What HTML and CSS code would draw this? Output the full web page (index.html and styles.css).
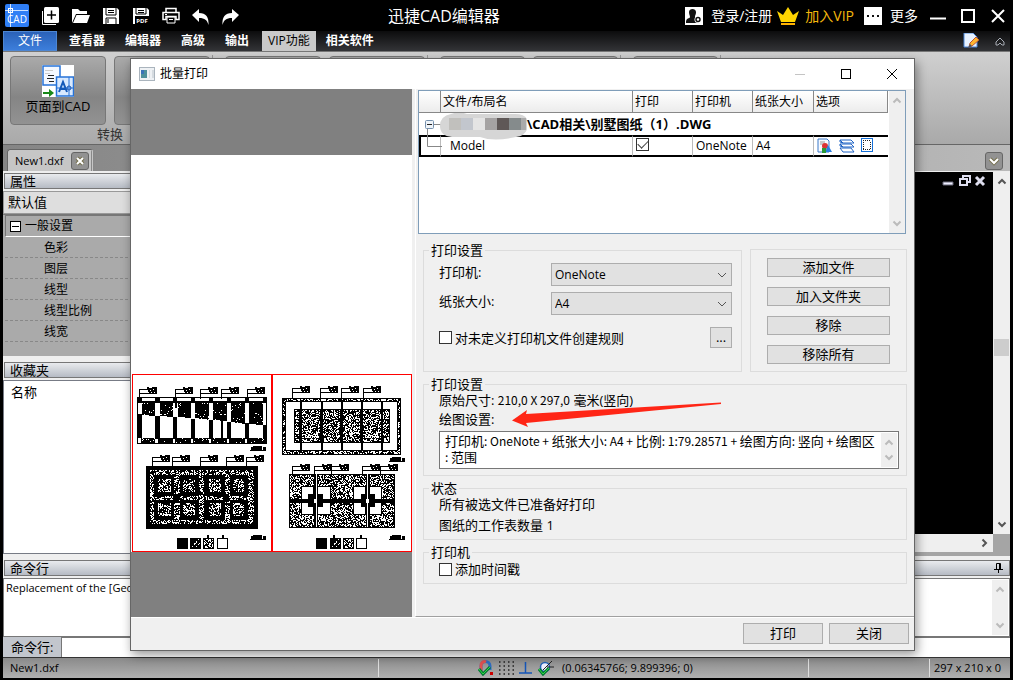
FILE: index.html
```html
<!DOCTYPE html>
<html lang="zh-CN">
<head>
<meta charset="utf-8">
<title>迅捷CAD编辑器</title>
<link rel="stylesheet" href="styles.css">
</head>
<body>
<svg class="defs" width="0" height="0" aria-hidden="true">
  <defs>
    <symbol id="up" viewBox="0 0 10 8"><path d="M1.500 6.500L5 3l3.500 3.500" fill="none" stroke="currentColor" stroke-width="2"/></symbol>
    <symbol id="down" viewBox="0 0 10 8"><path d="M1.500 1.500L5 5l3.500-3.500" fill="none" stroke="currentColor" stroke-width="2"/></symbol>
  </defs>
</svg>

<div class="app">
  <header class="titlebar">
    <svg class="logo" viewBox="0 0 24 23"><rect width="24" height="23" rx="2" fill="#2f7ef5"/><path d="M5.500 0v23M0 6.500h23" stroke="#cfe3ff" fill="none"/><rect x="3.500" y="4.500" width="4" height="4" fill="none" stroke="#fff"/><text x="12" y="19" text-anchor="middle" class="logo-text">CAD</text></svg>
    <nav class="quick" aria-label="快速访问">
      <button aria-label="新建"><svg viewBox="0 0 18 18"><path d="M.5 4v13.500H14" stroke="#fff" fill="none"/><rect x="2" y="0" width="15" height="16" rx="1.500" fill="#fff"/><path d="M9.500 3.500v9M5 8h9" stroke="#000" stroke-width="1.500"/></svg></button>
      <button aria-label="打开"><svg viewBox="0 0 18 18"><path d="M0 16V2h6l2 2h7v3H4z" fill="#fff"/><path d="M4.500 8H18l-3 8H1z" fill="#fff"/></svg></button>
      <button aria-label="保存"><svg viewBox="0 0 18 18"><path d="M1 1h14l2 2v14H1z" fill="#fff"/><path d="M4 1v7h10V1M4 17v-6h10v6" fill="none" stroke="#000"/><path d="M6 3.500h6M6 5.500h6M6 12v4" stroke="#000"/></svg></button>
      <button aria-label="保存为PDF"><svg viewBox="0 0 18 18"><path d="M1 1h14l2 2v14H1z" fill="#fff"/><path d="M4 1v6h10V1" fill="none" stroke="#000"/><path d="M6 3.500h6M6 5.500h6" stroke="#000"/><rect x="3" y="9" width="14" height="8" fill="#000"/><text x="10" y="15.500" text-anchor="middle" class="pdf-text">PDF</text></svg></button>
      <button aria-label="打印"><svg viewBox="0 0 18 18"><path d="M4 5V1.500h10V5M1 5.500h16v7h-3v-3H4v3H1z" fill="none" stroke="#fff" stroke-width="1.500"/><path d="M5 10h8v6H5zM7 12.500h4M3 7.500h2" fill="none" stroke="#fff"/></svg></button>
      <button aria-label="撤销"><svg viewBox="0 0 18 18"><path d="M0 8l7-6v4c7 0 10 4 9.500 12C15 13 13 11 7 11v4z" fill="#fff"/></svg></button>
      <button aria-label="重做"><svg viewBox="0 0 18 18"><path d="M17 8l-7-6v4C3 6 0 10 .5 18 2 13 4 11 10 11v4z" fill="#fff"/></svg></button>
    </nav>
    <h1 class="app-title">迅捷CAD编辑器</h1>
    <div class="account">
      <a href="#login"><svg viewBox="0 0 18 18"><rect width="18" height="18" fill="#fff"/><path d="M4 5c0-4 7-4 7 0 0 3-1 3-1 5 2 1 1 5 3 6H1c0-4 1-4 4-5.500C5 8 4 8 4 5z" fill="#111"/><circle cx="13" cy="12.500" r="3.500" fill="#fff"/><circle cx="13" cy="12.500" r="2" fill="#fff" stroke="#111" stroke-width="1.500"/></svg>登录/注册</a>
      <a href="#vip" class="vip"><svg class="crown" viewBox="0 0 22 18"><path d="M0 4l6 4 5-8 5 8 6-4-4 11H4z" fill="#ffd400"/><path d="M4 16h14v2H4z" fill="#ffb300"/></svg>加入VIP</a>
      <a href="#more"><svg viewBox="0 0 18 18"><rect width="18" height="18" fill="#fff"/><path d="M3 8h2v2H3zm5 0h2v2H8zm5 0h2v2h-2z" fill="#111"/></svg>更多</a>
    </div>
    <div class="win">
      <button aria-label="最小化"><svg viewBox="0 0 16 16"><path d="M0 10.500h16" stroke="#fff" stroke-width="2"/></svg></button>
      <button aria-label="最大化"><svg viewBox="0 0 16 16"><rect x="2" y="2" width="12" height="12" fill="none" stroke="#fff" stroke-width="2"/></svg></button>
      <button aria-label="关闭程序"><svg viewBox="0 0 16 16"><path d="M2 2l12 12M14 2L2 14" stroke="#fff" stroke-width="2"/></svg></button>
    </div>
  </header>

  <nav class="menubar">
    <a href="#file" class="file">文件</a>
    <a href="#viewer">查看器</a>
    <a href="#editor">编辑器</a>
    <a href="#adv">高级</a>
    <a href="#out">输出</a>
    <a href="#vipf" class="current">VIP功能</a>
    <a href="#soft">相关软件</a>
    <span class="menu-tools">
      <svg width="16" height="16" viewBox="0 0 16 16"><path d="M1 0h9l4 4v10H1z" fill="#e8f2ff" stroke="#4a86d8"/><path d="M6 14l1-4 6-6 3 3-7 6z" fill="#ffb52e" stroke="#b53"/><path d="M5 15l2-4 2 2z" fill="#456"/></svg>
      <svg width="10" height="9" viewBox="0 0 10 9"><path d="M1 5l4-4 4 4M1 5v3h2l2-2 2 2h2V5" fill="none" stroke="#a8adb5"/></svg>
    </span>
  </nav>

  <section class="ribbon">
    <div class="group">
      <div class="group-row">
        <button class="big"><svg width="32" height="32" viewBox="0 0 32 32"><rect width="32" height="32" fill="#fff"/><rect x="1" y="1" width="17" height="19" fill="#f4f8ff" stroke="#2673d9" stroke-width="1.500"/><path d="M3 5.500h8M3 8.500h5" stroke="#ccc"/><path d="M6 10.500h6M5 13.500h7M7 16.500h5" stroke="#222"/><rect x="14.500" y="12" width="17" height="19" fill="#d8e9ff" stroke="#2673d9" stroke-width="1.500"/><path d="M27 12v19M15 23h16" stroke="#2673d9"/><circle cx="27" cy="23" r="2" fill="none" stroke="#1b56b0"/><path d="M17 27l4-10 4 10M18.500 24h5" fill="none" stroke="#1459b8" stroke-width="2"/><path d="M1 27h6v-3l5 4-5 4v-3H1z" fill="#188818"/></svg><span>页面到CAD</span></button>
        <button class="big" aria-label="PDF到DWG"></button>
      </div>
      <div class="group-name">转换</div>
    </div>
    <div class="group"><div class="group-row"><button class="big" aria-label="批量打印"></button><button class="big" aria-label="批量转换"></button></div></div>
    <div class="group narrow"><div class="group-row"><button class="big" aria-label="比较"></button><button class="big" aria-label="插入"></button></div></div>
    <div class="group narrow"><div class="group-row"><button class="big" aria-label="注册"></button></div></div>
  </section>

  <div class="tabs">
    <span class="tab">New1.dxf<button class="soft-button" aria-label="关闭标签"><svg width="10" height="10" viewBox="0 0 10 10"><path d="M2 2l6 6M8 2L2 8" stroke="#75704e" stroke-width="4"/><path d="M2 2l6 6M8 2L2 8" stroke="#fff" stroke-width="2"/></svg></button></span>
    <button class="soft-button" aria-label="标签列表"><svg width="10" height="10" viewBox="0 0 10 10"><path d="M1 3l4 4 4-4" fill="none" stroke="#75704e" stroke-width="4"/><path d="M1 3l4 4 4-4" fill="none" stroke="#fff" stroke-width="2"/></svg></button>
  </div>

  <main class="workspace">
    <aside class="side">
      <h2 class="dock-title">属性</h2>
      <div class="default-value">默认值</div>
      <div class="props">
        <div class="props-head"><svg width="11" height="11" viewBox="0 0 11 11"><rect x=".5" y=".5" width="10" height="10" fill="#fff" stroke="#000"/><path d="M2 5.500h7" stroke="#000"/></svg>一般设置</div>
        <ul><li>色彩</li><li>图层</li><li>线型</li><li>线型比例</li><li>线宽</li></ul>
      </div>
      <h2 class="dock-title fav-title">收藏夹</h2>
      <div class="fav">名称</div>
    </aside>
    <section class="drawing">
      <div class="canvas">
        <svg width="44" height="12" viewBox="0 0 44 12"><path d="M1 7h10v3H1z" fill="#eef" stroke="#667"/><path d="M21 1h7v6h-7z" fill="none" stroke="#dde" stroke-width="2"/><path d="M18 4h7v6h-7z" fill="#000" stroke="#dde" stroke-width="2"/><path d="M34 2l8 8M42 2l-8 8" stroke="#dde" stroke-width="3"/></svg>
      </div>
      <div class="vscroll"><svg width="10" height="8"><use href="#up"/></svg><span class="thumb"></span><svg width="10" height="8"><use href="#down"/></svg></div>
      <div class="hscroll"><svg width="8" height="10" viewBox="0 0 8 10"><path d="M1.500 1.500L5 5 1.500 8.500" fill="none" stroke="currentColor" stroke-width="2"/></svg></div>
    </section>
  </main>

  <section class="command">
    <h2 class="dock-title">命令行<svg width="9" height="10" viewBox="0 0 9 10"><path d="M2.500 6V.5h4V6M0 6.500h9M4.500 7v3M5.500 1v5" fill="none" stroke="#000"/></svg></h2>
    <div class="log"><p>Replacement of the [GeoCAD] font</p><div class="mini-scroll"><svg width="10" height="8"><use href="#up"/></svg><svg width="10" height="8"><use href="#down"/></svg></div></div>
    <div class="prompt"><label for="cmd">命令行:</label><input id="cmd" type="text"></div>
  </section>

  <footer class="status">
    <span class="status-file">New1.dxf</span>
    <span class="status-icons">
      <svg width="16" height="16" viewBox="0 0 16 16"><path d="M3 11V6c0-6 9-6 9 0v4" fill="none" stroke="#2f6cc0" stroke-width="3"/><path d="M3 11V6c0-4 3-5 5-4" fill="none" stroke="#e05050" stroke-width="3"/><path d="M1 9l4 5 7-7" fill="none" stroke="#073" stroke-width="3"/><path d="M1 9l4 5 7-7" fill="none" stroke="#3d4"/><path d="M12 12h3v3h-3z" fill="#c00"/></svg>
      <svg width="16" height="16" viewBox="0 0 16 16"><path d="M1 2h15M1 6h15M1 10h15M1 14h15" stroke="#222" stroke-width="1.500" stroke-dasharray="1.500 3"/></svg>
      <svg width="16" height="16" viewBox="0 0 16 16"><path d="M7.500 2v11M1 13h13" stroke="#1556b8" stroke-width="1.500"/></svg>
      <svg width="16" height="16" viewBox="0 0 16 16"><circle cx="7" cy="7" r="4.500" fill="#eef" stroke="#2463b8" stroke-width="1.500"/><path d="M5 10l9-9M9 7h7" stroke="#222"/><path d="M1 9l4 5 6-6" fill="none" stroke="#073" stroke-width="3"/><path d="M1 9l4 5 6-6" fill="none" stroke="#3d4"/></svg>
    </span>
    <span class="coords">(0.06345766; 9.899396; 0)</span>
    <span class="size">297 x 210 x 0</span>
  </footer>
</div>

<div class="dialog" role="dialog" aria-labelledby="dlg-title">
  <div class="dialog-title">
    <svg width="16" height="14" viewBox="0 0 16 14"><rect x=".5" y=".5" width="15" height="13" fill="#eef1f4" stroke="#aab4bd"/><path d="M2 3h6v8H2z" fill="#4c8f9b"/><path d="M2 3h3v4H2z" fill="#3972b8"/><path d="M10 3h1v8h-1zM13 3h2v8h-2z" fill="#d5dbe0"/></svg>
    <h2 id="dlg-title">批量打印</h2>
    <button aria-label="最小化窗口" disabled><svg width="12" height="12"><path d="M1 6.500h10" stroke="#c4c4c4"/></svg></button>
    <button aria-label="最大化窗口"><svg width="12" height="12"><rect x="1.500" y="1.500" width="9" height="9" fill="none" stroke="#000"/></svg></button>
    <button aria-label="关闭窗口"><svg width="12" height="12"><path d="M1 1l10 10M11 1L1 11" stroke="#000"/></svg></button>
  </div>
  <div class="dialog-body">
    <div class="preview">
      <div class="paper">
        <svg class="plans" viewBox="0 0 281 178" shape-rendering="crispEdges">
          <defs>
            <pattern id="noise" width="60" height="60" patternUnits="userSpaceOnUse"><rect width="60" height="60" fill="#fff"/><path class="grain" data-density="0.580" d=""/></pattern>
            <pattern id="dense" width="60" height="60" patternUnits="userSpaceOnUse"><rect width="60" height="60"/><path class="grain" fill="#fff" data-density="0.050" d=""/></pattern>
            <symbol id="leader" width="22" height="14" overflow="visible"><path d="M.5 12V2.500H16M0 6.500h18" fill="none" stroke="#000"/><path d="M8 0h2v1h3V0h5v7h-8V5H9V3H8z"/><path d="M11 3h1v1h-1zM14 2h1v1h-1zM15 5h1v1h-1zM12 5h1v1h-1z" fill="#fff"/></symbol>
            <symbol id="caption" width="18" height="6" overflow="visible"><path d="M1 1h2V0h9v4h1V1h3v4H0V4h1z"/></symbol>
          </defs>
          <g transform="translate(-1 -4)">
            <rect x="2.500" y="4.500" width="139" height="177" fill="#fff" stroke="#f00"/>
            <rect x="7.500" y="27.500" width="129" height="46" fill="#fff" stroke="#000"/>
            <path d="M12 32h13v14l-13-1zM30 32h13v15l-13-1zM48 32h13v16l-13-1zM65 32h14v18l-14-2zM83 32h14v19l-14-1zM101 32h14v22l-14-2zM119 32h14v23l-14-1z" fill="url(#dense)"/>
            <path d="M8 44h4v24H8zM25 46h5v22h-5zM43 47h4v21h-4zM61 49h4v19h-4zM79 50h4v18h-4zM97 52h4v16h-4zM115 53h4v15h-4zM133 55h4v13h-4zM91 51h2v17h-2zM8 31h128v2H8zM8 28h4v5H8zM25 28h5v5h-5zM43 28h4v10h-2v-5h-2zM61 28h4v5h-4zM79 28h4v5h-4zM97 28h4v5h-4zM115 28h4v5h-4zM133 28h4v5h-4z"/>
            <path d="M11 68h125v5H11z" fill="url(#dense)"/>
            <path d="M25 69h3v4h-3zM43 69h2v4h-2zM61 69h2v4h-2zM79 69h2v4h-2zM97 69h2v4h-2zM115 69h2v4h-2z" fill="#fff"/>
            <use href="#leader" x="9" y="17"/><use href="#leader" x="45" y="17"/><use href="#leader" x="70" y="17"/><use href="#leader" x="91" y="17"/><use href="#leader" x="117" y="17"/>
            <use href="#caption" x="120" y="76"/>
            <path d="M16 96h112v63H16z"/>
            <path d="M20 100h104v54H20z" fill="url(#noise)"/>
            <path d="M24 105h20v21H24zM50 105h19v21H50zM75 105h20v21H75zM100 105h18v21h-18zM24 130h20v20H24zM50 130h19v20H50zM75 130h20v20H75zM100 130h18v20h-18zM43 124h6v8h-6zM93 124h6v8h-6zM68 100h1v54h-1zM74 100h1v54h-1z"/>
            <path d="M28 109h13v13H28zM53 109h12v13H53zM79 109h12v13H79zM103 109h11v13h-11zM28 133h13v13H28zM53 133h12v13H53zM79 133h12v13H79zM103 133h11v13h-11z" fill="url(#noise)"/>
            <use href="#leader" x="22" y="85"/><use href="#leader" x="42" y="85"/><use href="#leader" x="70" y="85"/><use href="#leader" x="96" y="85"/><use href="#leader" x="116" y="85"/>
            <path d="M47 168h11v11H47zM60 168h11v11H60zM73 168h11v11H73zM77 165h2v3h-2zM92 165h2v3h-2z"/>
            <path d="M62 177l7-8M66 177l4-4" stroke="#fff" stroke-dasharray="2 1"/>
            <path d="M74 169h9v9h-9z" fill="url(#noise)"/><rect x="87.500" y="168.500" width="10" height="10" fill="#fff" stroke="#000"/>
            <use href="#caption" x="120" y="165"/>
          </g>
          <g transform="translate(139 -4)">
            <rect x="2.500" y="4.500" width="139" height="177" fill="#fff" stroke="#f00"/>
            <rect x="12.500" y="28.500" width="118" height="56" fill="url(#noise)" stroke="#000"/>
            <rect x="15.500" y="31.500" width="112" height="49" fill="#fff" stroke="#000"/>
            <rect x="24.500" y="39.500" width="95" height="33" fill="url(#noise)" stroke="#000"/>
            <path d="M30 32h2v49h-2zM51 32h2v49h-2zM71 32h2v49h-2zM91 32h2v49h-2zM111 32h2v49h-2zM29 39h3v34h-3zM50 39h3v34h-3zM70 39h3v34h-3zM90 39h3v34h-3z"/>
            <use href="#leader" x="22" y="16"/><use href="#leader" x="50" y="16"/><use href="#leader" x="71" y="16"/><use href="#leader" x="93" y="16"/>
            <use href="#caption" x="119" y="87"/>
            <rect x="19.500" y="104.500" width="105" height="53" fill="url(#noise)" stroke="#000"/>
            <path d="M31 116h30v29H31zM83 116h29v29H83z"/><path d="M32 117h11v27H32zM48 117h12v27H48zM84 117h11v27H84zM100 117h11v27h-11z" fill="#fff"/>
            <path d="M20 129h105v4H20zM38 124h15v13H38zM91 124h14v13H91zM44 104h4v53h-4zM96 104h4v53h-4z"/>
            <path d="M46 104h1v53h-1zM97 104h1v53h-1zM44 129h3v4h-3zM96 129h3v4h-3z" fill="#fff"/>
            <use href="#leader" x="22" y="94"/><use href="#leader" x="44" y="94"/><use href="#leader" x="61" y="94"/><use href="#leader" x="92" y="94"/><use href="#leader" x="110" y="94"/>
            <path d="M46 168h11v11H46zM60 168h11v11H60zM73 168h11v11H73zM63 165h2v3h-2zM90 165h2v3h-2z"/>
            <path d="M62 177l7-8M66 177l4-4" stroke="#fff" stroke-dasharray="2 1"/>
            <path d="M74 169h9v9h-9z" fill="url(#noise)"/><rect x="86.500" y="168.500" width="10" height="10" fill="#fff" stroke="#000"/>
            <use href="#caption" x="119" y="165"/>
          </g>
        </svg>
      </div>
    </div>

    <div class="options">
      <div class="files">
        <table>
          <colgroup><col class="c-tree"><col><col class="c-print"><col class="c-printer"><col class="c-paper"><col class="c-opts"></colgroup>
          <thead><tr><th></th><th>文件/布局名</th><th>打印</th><th>打印机</th><th>纸张大小</th><th>选项</th></tr></thead>
          <tbody>
            <tr class="drawing-row"><td colspan="6"><div class="file-cell">
              <svg width="108" height="32" viewBox="0 0 108 32"><path d="M8.500 15V32M15 11.500h9" stroke="#888" fill="none"/><rect x="6.500" y="7.500" width="8" height="8" rx="1" fill="#eef3f8" stroke="#7590ad"/><path d="M8 11.500h5" stroke="#222"/><path d="M32 1q8-3 16 0h48q14 0 13 11t-12 12q-22 5-36 0H33Q21 23 21 13T32 1z" fill="#d6d6d6"/><path d="M30 5h12v12H30z" fill="#c1c0bd"/><path d="M42 5h12v12H42z" fill="#c2c6cd"/><path d="M54 5h12v12H54z" fill="#e4e4e4"/><path d="M66 5h12v12H66z" fill="#a5a3a3"/><path d="M78 5h12v12H78z" fill="#5f5857"/><path d="M90 5h12v12H90z" fill="#858b8c"/><path d="M102 5h5v12h-5z" fill="#aaa"/></svg>
              <span>\CAD相关\别墅图纸（1）.DWG</span></div></td></tr>
            <tr class="layout-row"><td><svg width="22" height="18" viewBox="0 0 22 18"><path d="M7.500 0v9.500H22" fill="none" stroke="#888"/></svg></td><td class="model">Model</td><td><input class="tick" type="checkbox" aria-label="打印 Model" checked></td><td>OneNote</td><td>A4</td>
              <td class="row-icons"><svg width="16" height="16" viewBox="0 0 16 16"><path d="M1 1h9l2 2v11H1z" fill="#f7faff" stroke="#3a78c9"/><path d="M3 4h5M3 6h4" stroke="#999"/><circle cx="8" cy="8" r="3" fill="#d33"/><path d="M11 7l4 7H8z" fill="#2c7fe0"/><path d="M5 10h4v5H5z" fill="#2a9a38"/></svg><svg width="16" height="16" viewBox="0 0 16 16"><path d="M1 2h11l3 3H4zM1 6h11l3 3H4zM1 10h11l3 4H4zM1 2v2l3 1M1 6v2l3 1" fill="#fff" stroke="#1f62c4"/></svg><svg width="12" height="14" viewBox="0 0 12 14" shape-rendering="crispEdges"><rect x=".5" y=".5" width="11" height="13" fill="#fff" stroke="#1670d8"/><path d="M2 2.500h8M2 11.500h8M2.500 4v7M9.500 4v7" fill="none" stroke="#222" stroke-dasharray="1 1"/></svg></td></tr>
          </tbody>
        </table>
        <div class="mini-scroll"><svg width="10" height="8"><use href="#up"/></svg><svg width="10" height="8"><use href="#down"/></svg></div>
      </div>

      <div class="settings">
        <fieldset class="printer-set">
          <legend>打印设置</legend>
          <div class="pair"><label for="printer">打印机:</label><select id="printer"><option>OneNote</option></select></div>
          <div class="pair"><label for="paper">纸张大小:</label><select id="paper"><option>A4</option></select></div>
          <div class="rule"><input class="tick" type="checkbox" id="rule"><label for="rule">对未定义打印机文件创建规则</label><button class="btn dots" aria-label="更多规则">...</button></div>
        </fieldset>
        <fieldset class="actions">
          <button class="btn">添加文件</button><button class="btn">加入文件夹</button><button class="btn">移除</button><button class="btn">移除所有</button>
        </fieldset>
      </div>

      <fieldset class="plot">
        <legend>打印设置</legend>
        <p>原始尺寸: <span class="latin">210,0 X 297,0</span> 毫米(竖向)</p>
        <label for="plot-text">绘图设置:</label>
        <div class="memo"><output id="plot-text">打印机<span class="latin">: OneNote + </span>纸张大小<span class="latin">: A4 + </span>比例<span class="latin">: 1:79.28571 + </span>绘图方向<span class="latin">: </span>竖向<span class="latin"> + </span>绘图区<br><span class="latin">: </span>范围</output><div class="mini-scroll"><svg width="10" height="8"><use href="#up"/></svg><svg width="10" height="8"><use href="#down"/></svg></div></div>
      </fieldset>
      <fieldset class="state">
        <legend>状态</legend>
        <p>所有被选文件已准备好打印</p>
        <p>图纸的工作表数量 1</p>
      </fieldset>
      <fieldset class="stamp">
        <legend>打印机</legend>
        <input class="tick" type="checkbox" id="stamp"><label for="stamp">添加时间戳</label>
      </fieldset>
    </div>
  </div>
  <div class="dialog-foot"><button class="btn">打印</button><button class="btn">关闭</button></div>
  <svg class="arrow" width="210" height="26" viewBox="0 0 210 26" aria-hidden="true"><path d="M0 18.500L15 8l-1 4L209 .5v1.500L14 21l2 4z" fill="#ff2616"/></svg>
</div>
<script src="grain.js"></script>
</body>
</html>
```

FILE: grain.js
```js
// Fills the hatch patterns of the plan preview with a repeatable speckle.
let seed = 7;
const next = () => (seed = (seed * 16807) % 2147483647) / 2147483647;

document.querySelectorAll('.grain').forEach((path) => {
  const density = Number(path.dataset.density);
  let d = '';
  for (let y = 0; y < 60; y++) {
    for (let x = 0; x < 60; x++) {
      if (next() < density) d += `M${x} ${y}h1v1h-1z`;
    }
  }
  path.setAttribute('d', d);
});
```

FILE: styles.css
```css
* { box-sizing: border-box; }
body {
  margin: 0;
  background: #000;
  color: #000;
  font: 13px/18px "Open Sans", "Noto Sans CJK SC", sans-serif;
}
h1, h2, p, ul { margin: 0; padding: 0; font-weight: normal; }
button, input, select { font: inherit; color: inherit; margin: 0; }
button { padding: 0; border: 0; background: none; }
svg { display: block; flex: none; }
a { color: inherit; text-decoration: none; }
.defs { position: absolute; }

.app {
  display: flex;
  flex-direction: column;
  min-height: 100vh;
  padding: 0 3px 2px;
  overflow: hidden;
}

/* Title bar */
.titlebar {
  display: flex;
  align-items: center;
  justify-content: space-between;
  height: 31px;
  padding: 0 4px 0 2px;
  color: #fff;
}
.logo { width: 24px; height: 23px; }
.logo-text { font-size: 10px; fill: #fff; }
.pdf-text { font-size: 6px; font-weight: bold; fill: #fff; }
.quick { display: flex; gap: 12px; margin-left: 13px; }
.quick svg { width: 18px; height: 18px; }
.app-title { flex: 1; padding-left: 148px; font-size: 16px; line-height: 24px; }
.account { display: flex; align-items: center; gap: 10px; font-size: 14px; }
.account a { display: flex; align-items: center; gap: 8px; }
.account svg { width: 18px; height: 18px; }
.account .crown { width: 22px; }
.account .vip { gap: 6px; margin-left: -5px; color: #f5b80c; }
.win { display: flex; gap: 14px; margin-left: 12px; }
.win svg { width: 16px; height: 16px; }

/* Menu */
.menubar {
  display: flex;
  height: 20px;
  font-size: 12px;
  line-height: 19px;
  font-weight: bold;
  color: #fff;
  background: linear-gradient(#0c0c0d, #333437);
}
.menubar a { padding: 0 10px; }
.menubar .file { padding: 0 14px; margin-right: 2px; background: linear-gradient(#2b62b8, #3c7edb); font-weight: normal; border: 1px solid #4d86d2; line-height: 18px; }
.menubar .current { margin: 0 0 -1px 3px; padding: 0 6px; background: #c9c9c9; color: #000; font-weight: normal; }
.menu-tools { display: flex; align-items: center; gap: 16px; margin-left: auto; padding-right: 5px; }

/* Ribbon */
.ribbon {
  display: flex;
  height: 94px;
  padding: 3px 0 0;
  border-top: 1px solid #777;
  border-bottom: 1px solid #666;
  background: linear-gradient(#d0d0d0, #a9a9a9);
}
.group { padding: 1px 2px 0 7px; margin-right: 4px; border-right: 1px solid #999; }
.group + .group { padding-left: 8px; }
.group-row { display: flex; gap: 8px; }
.big {
  display: flex;
  flex-direction: column;
  align-items: center;
  justify-content: center;
  width: 96px;
  height: 69px;
  padding-bottom: 2px;
  border: 1px solid #777;
  border-radius: 4px;
  background: linear-gradient(#aaa, #858585 60%, #929292);
}
.narrow .big { width: 85px; }
.group-name { text-align: center; line-height: 19px; color: #333; }

/* Document tabs */
.tabs {
  display: flex;
  align-items: flex-end;
  justify-content: space-between;
  height: 27px;
  padding: 0 7px 0 4px;
  background: linear-gradient(90deg, #858585, #b9b9b9);
  border-bottom: 1px solid #eee;
}
.tab {
  display: flex;
  align-items: center;
  gap: 8px;
  height: 22px;
  padding: 0 2px 0 7px;
  border: 1px solid #666;
  border-right: 3px double #888;
  border-bottom: 0;
  border-radius: 3px 3px 0 0;
  background: #c6c6c6;
  font-size: 11px;
}
.soft-button { display: grid; place-items: center; width: 18px; height: 18px; border: 1px solid #666; border-radius: 3px; background: #929292; }
.tabs > .soft-button { margin-bottom: 1px; }

/* Workspace */
.workspace { display: flex; flex: 1; background: #efefef; }
.side { display: flex; flex-direction: column; width: 280px; }
.dock-title {
  display: flex;
  align-items: center;
  justify-content: space-between;
  height: 16px;
  margin: 2px 0 2px 1px;
  padding: 0 6px 0 5px;
  border: 1px solid #777;
  background: linear-gradient(#e9ebee, #b6bbc4);
  font-size: 13px;
  line-height: 12px;
}
.side .dock-title { margin-top: 1px; }
.default-value { height: 23px; padding: 0 4px; border: 1px solid #999; background: #dedede; line-height: 20px; }
.props { height: 142px; padding-left: 2px; border-top: 1px solid #777; background: #aaa; font-size: 12px; }
.props-head { display: flex; align-items: center; gap: 4px; height: 22px; padding-left: 4px; border: 1px solid #777; border-bottom-color: #fff; }
.props li { height: 21px; padding-left: 39px; border-bottom: 1px dashed #888; line-height: 21px; list-style: none; }
.side .fav-title { margin-top: 6px; }
.fav { flex: 1; margin-bottom: 2px; padding: 2px 7px; border: 1px solid #777b85; background: #fff; }
.drawing { flex: 1; display: grid; grid-template: 1fr 22px / 1fr 17px; background: #a5a5a5; }
.canvas { display: flex; justify-content: flex-end; align-items: flex-start; padding: 3px 7px; background: #000; }
.vscroll { display: flex; flex-direction: column; align-items: center; justify-content: space-between; padding: 5px 0; background: #efefef; color: #555; }
.thumb { width: 15px; height: 17px; margin-bottom: 12px; background: #cdcdcd; }
.hscroll { display: flex; align-items: center; justify-content: flex-end; height: 18px; padding-right: 4px; background: #efefef; color: #555; }

/* Command line */
.command { height: 101px; padding-top: 2px; background: #efefef; }
.log { display: flex; justify-content: space-between; height: 59px; padding: 1px 1px 1px 2px; border: 1px solid #777; background: #fff; font-size: 11px; line-height: 16px; }
.mini-scroll { display: flex; flex-direction: column; align-items: center; justify-content: space-between; flex: none; width: 16px; padding: 5px 0; background: #efefef; color: #bbb; }
.prompt { display: flex; height: 22px; }
.prompt label { width: 59px; padding-left: 8px; background: #c2c6cd; line-height: 20px; border-right: 1px solid #777; }
.prompt input { flex: 1; border: 0; border-top: 1px solid #777; background: #fff; }

/* Status bar */
.status {
  display: flex;
  align-items: center;
  height: 21px;
  border-top: 1px solid #333;
  background: linear-gradient(#8a8a8a, #b0b0b0);
  font-size: 11px;
}
.status-file { width: 376px; padding-left: 7px; border-right: 1px solid #ddd; }
.status-icons { display: flex; gap: 4px; margin: 0 8px 0 99px; }
.coords { flex: 1; margin-right: 120px; border-right: 1px solid #ddd; }
.size { width: 81px; padding-left: 4px; border-left: 1px solid #ddd; }

/* Print dialog floats over the editor */
.dialog {
  position: absolute;
  left: 130px;
  top: 58px;
  width: calc(100vw - 228px);
  border: 1px solid #666;
  background: #f0f0f0;
  box-shadow: 2px 4px 10px rgba(0, 0, 0, .4);
}
.dialog-title { display: flex; align-items: center; height: 30px; padding: 0 16px 0 8px; background: #fff; }
.dialog-title h2 { flex: 1; margin-left: 5px; font-size: 12px; }
.dialog-title button { margin-left: 34px; }
.dialog-body { display: flex; border-bottom: 1px solid #fff; }
.preview { display: flex; flex-direction: column; width: 281px; padding: 66px 0 65px; background: #808080; }
.paper { flex: 1; display: flex; align-items: flex-end; background: #fff; }
.plans { width: 100%; }
.options { flex: 1; margin-left: 3px; padding: 1px 8px 32px 2px; border-left: 1px solid #fff; border-bottom: 1px solid #a0a0a0; }

.files { display: flex; justify-content: space-between; height: 144px; border: 1px solid #7f9db9; background: #fff; font-size: 12px; }
.files .mini-scroll { margin-left: 1px; }
table { flex: 1; align-self: flex-start; border-collapse: separate; border-spacing: 0; table-layout: fixed; width: 0; }
.c-tree { width: 22px; }
.c-print, .c-printer { width: 60px; }
.c-paper { width: 61px; }
.c-opts { width: 74px; }
th, td { padding: 0 0 0 3px; text-align: left; line-height: 18px; }
th { height: 22px; padding-left: 2px; border-right: 1px solid #888; border-bottom: 1px solid #888; background: linear-gradient(#fff, #ececec); font-weight: normal; }
.drawing-row td { height: 22px; padding: 0; font-weight: bold; font-size: 13px; }
.file-cell { display: flex; align-items: center; height: 22px; }
.file-cell svg { height: 32px; margin-bottom: -10px; }
.layout-row td { height: 22px; border: 2px solid #000; border-width: 2px 0; border-right: 1px solid #bbb; }
.layout-row td:first-child { padding: 0; border-left: 2px solid #000; }
.layout-row td:last-child { border-right: 0; }
.layout-row .model { padding-left: 9px; }
.layout-row svg { display: inline-block; vertical-align: top; margin-top: 1px; }
.layout-row td:first-child svg { display: block; margin: 0 0 0 -1px; }
.row-icons svg + svg { margin-left: 6px; }

.tick {
  appearance: none;
  flex: none;
  display: inline-grid;
  place-items: center;
  width: 13px;
  height: 13px;
  border: 1px solid #333;
  background: #fff;
  vertical-align: middle;
}
.tick:checked::before { content: ""; width: 9px; height: 5px; margin-bottom: 3px; border: solid #444; border-width: 0 0 1px 1px; transform: rotate(-45deg); }
.layout-row .tick { display: grid; margin-top: -3px; }

fieldset { min-width: 0; margin: 5px -1px 0 5px; padding: 0 7px 0 15px; border: 1px solid #dcdcdc; }
legend { margin-left: -10px; padding: 0 2px; line-height: 14px; }
.settings { display: grid; grid-template-columns: 319fr 157fr; gap: 8px; margin: 9px -1px 0 5px; }
.settings fieldset { margin: 0; }
.settings .printer-set { padding: 6px 9px 22px 15px; }
.pair { display: flex; justify-content: space-between; height: 23px; margin-bottom: 6px; }
.pair label { line-height: 18px; }
select {
  appearance: none;
  width: 181px;
  padding: 0 3px;
  border: 1px solid #adadad;
  border-radius: 0;
  background: #e1e1e1 url("data:image/svg+xml,%3Csvg xmlns='http://www.w3.org/2000/svg' width='10' height='6'%3E%3Cpath d='M1 1l4 4 4-4' fill='none' stroke='%23555'/%3E%3C/svg%3E") no-repeat right 4px center;
  font-size: 12px;
}
.rule { display: flex; align-items: center; gap: 3px; margin-top: 12px; }
.btn { border: 1px solid #adadad; background: #e1e1e1; line-height: 17px; }
.rule .dots { width: 22px; height: 21px; margin-left: auto; }
.settings .actions { display: grid; gap: 10px; margin-top: 6px; padding: 8px 16px 7px; }
.plot { padding-bottom: 6px; }
.plot p, .plot label { display: block; line-height: 19px; }
.latin { font-family: "Noto Sans CJK SC", sans-serif; font-size: 12px; line-height: 1; }
.memo { display: flex; height: 38px; margin-top: 2px; padding: 1px; border: 1px solid #777; background: #fff; }
.memo output { flex: 1; min-width: 0; padding-left: 4px; line-height: 16px; white-space: pre; }
.state { padding-bottom: 5px; }
.state p + p { margin-top: 3px; }
.stamp { display: flex; align-items: center; padding-top: 1px; padding-bottom: 5px; }
.stamp label { margin-left: 3px; }
.dialog-foot { display: flex; justify-content: flex-end; gap: 6px; padding: 5px 5px 6px; }
.dialog-foot .btn { width: 80px; height: 21px; }
.arrow { position: absolute; left: 381px; top: 343px; pointer-events: none; }
```
